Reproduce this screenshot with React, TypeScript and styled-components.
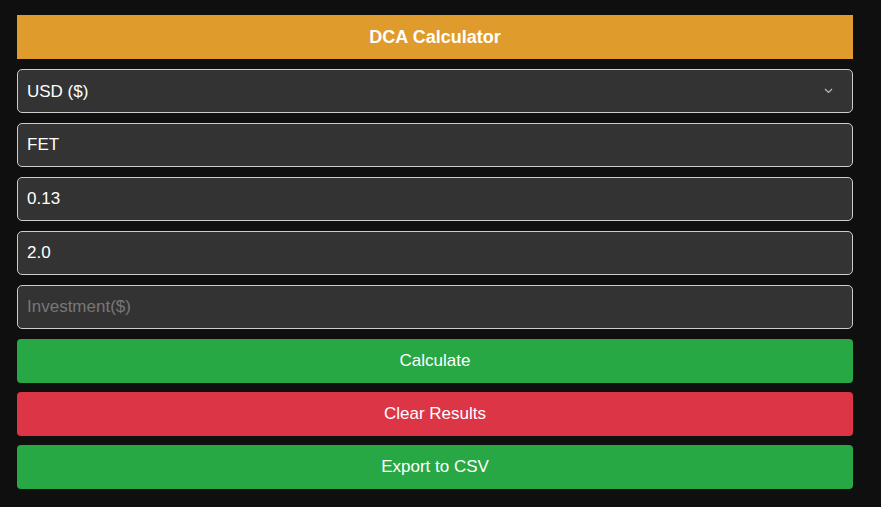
import React, { useState } from 'react';
import styled, { createGlobalStyle } from 'styled-components';

const GlobalStyle = createGlobalStyle`
  html, body {
    margin: 0;
    padding: 0;
    background: #0f0f0f;
    font-family: "Liberation Sans", Arial, sans-serif;
  }
`;

const Page = styled.div`
  padding: 15px 28px 18px 17px;
`;

const Form = styled.div`
  display: flex;
  flex-direction: column;
  gap: 10px;
`;

const Header = styled.div`
  height: 44px;
  display: flex;
  align-items: center;
  justify-content: center;
  background: #e09b2d;
  color: #fff;
  font-size: 18px;
  font-weight: bold;
`;

const SelectWrap = styled.div`
  position: relative;
  height: 44px;
`;

const Select = styled.select`
  appearance: none;
  width: 100%;
  height: 100%;
  box-sizing: border-box;
  background: #333;
  color: #fff;
  border: 1px solid #ccc;
  border-radius: 5px;
  padding: 0 9px;
  font-family: inherit;
  font-size: 17px;
  outline: none;
`;

const Chevron = styled.svg`
  position: absolute;
  right: 20px;
  top: 19px;
  pointer-events: none;
`;

const Input = styled.input`
  height: 44px;
  box-sizing: border-box;
  background: #333;
  color: #fff;
  border: 1px solid #ccc;
  border-radius: 5px;
  padding: 0 9px;
  font-family: inherit;
  font-size: 17px;
  outline: none;

  &::placeholder {
    color: #777;
  }
`;

const Button = styled.button<{ $tone: 'green' | 'red' }>`
  height: 44px;
  border: none;
  border-radius: 4px;
  background: ${p => (p.$tone === 'red' ? '#dc3545' : '#28a745')};
  color: #fff;
  font-family: inherit;
  font-size: 17px;
  cursor: pointer;

  & + & {
    margin-top: -1px;
  }
`;

export default function App() {
  const [currency, setCurrency] = useState('USD');
  const [coin, setCoin] = useState('FET');
  const [price, setPrice] = useState('0.13');
  const [target, setTarget] = useState('2.0');
  const [investment, setInvestment] = useState('');

  return (
    <Page>
      <GlobalStyle />
      <Form>
        <Header>DCA Calculator</Header>
        <SelectWrap>
          <Select value={currency} onChange={e => setCurrency(e.target.value)}>
            <option value="USD">USD ($)</option>
            <option value="EUR">EUR (€)</option>
          </Select>
          <Chevron width="9" height="6" viewBox="0 0 9 6">
            <path d="M1 1l3.5 3.5L8 1" fill="none" stroke="#bbb" strokeWidth="1.2" />
          </Chevron>
        </SelectWrap>
        <Input value={coin} onChange={e => setCoin(e.target.value)} />
        <Input value={price} onChange={e => setPrice(e.target.value)} />
        <Input value={target} onChange={e => setTarget(e.target.value)} />
        <Input
          placeholder="Investment($)"
          value={investment}
          onChange={e => setInvestment(e.target.value)}
        />
        <Button $tone="green">Calculate</Button>
        <Button $tone="red">Clear Results</Button>
        <Button $tone="green">Export to CSV</Button>
      </Form>
    </Page>
  );
}
